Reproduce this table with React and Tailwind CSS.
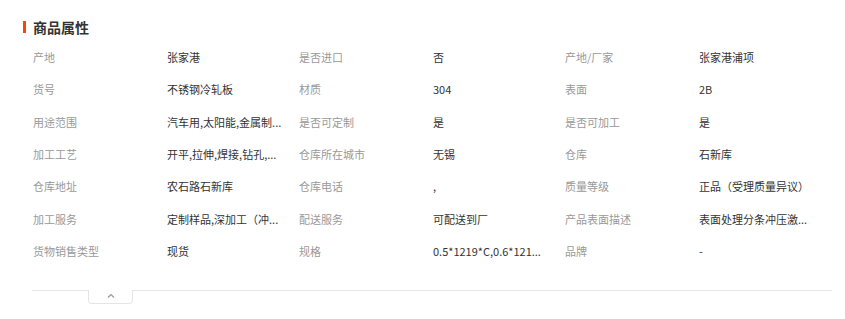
import React from "react";

const rows = [
  ["产地", "张家港", "是否进口", "否", "产地/厂家", "张家港浦项"],
  ["货号", "不锈钢冷轧板", "材质", "304", "表面", "2B"],
  ["用途范围", "汽车用,太阳能,金属制...", "是否可定制", "是", "是否可加工", "是"],
  ["加工工艺", "开平,拉伸,焊接,钻孔,...", "仓库所在城市", "无锡", "仓库", "石新库"],
  ["仓库地址", "农石路石新库", "仓库电话", ",", "质量等级", "正品（受理质量异议）"],
  ["加工服务", "定制样品,深加工（冲...", "配送服务", "可配送到厂", "产品表面描述", "表面处理分条冲压激..."],
  ["货物销售类型", "现货", "规格", "0.5*1219*C,0.6*121...", "品牌", "-"],
];

export default function App() {
  return (
    <div
      className="w-[845px] h-[319px] bg-white overflow-hidden"
      style={{ fontFamily: '"Noto Sans CJK SC", "Liberation Sans", sans-serif' }}
    >
      <div className="flex items-center pl-[23px] pt-[20px] h-[13px] box-content">
        <div className="w-[3px] h-[12px] bg-[#ff4400]" />
        <div className="ml-[7px] text-[14px] font-bold text-[#333] leading-[14px]">商品属性</div>
      </div>
      <div className="mt-[8px] pl-[33px]">
        {rows.map((r, i) => (
          <div
            key={i}
            className="grid grid-cols-[134px_132px_134px_132px_134px_132px] h-[32.33px] items-center text-[11px] leading-[16px]"
          >
            {r.map((c, j) => (
              <div
                key={j}
                className={
                  j % 2 === 0
                    ? "text-[#999] whitespace-nowrap overflow-hidden"
                    : "text-[#333] whitespace-nowrap overflow-hidden"
                }
              >
                {c}
              </div>
            ))}
          </div>
        ))}
      </div>
      <div className="mt-[23px] ml-[32px] w-[800px] border-t border-[#e5e5e5] relative">
        <div className="ml-[56px] w-[45px] h-[14px] -mt-px border border-t-0 border-[#e5e5e5] rounded-b-[4px] bg-white flex justify-center pt-[3px]">
          <svg width="8" height="5" viewBox="0 0 8 5" className="block">
            <path d="M1 4.5 L4 1.5 L7 4.5" fill="none" stroke="#999" strokeWidth="1.2" />
          </svg>
        </div>
      </div>
    </div>
  );
}
